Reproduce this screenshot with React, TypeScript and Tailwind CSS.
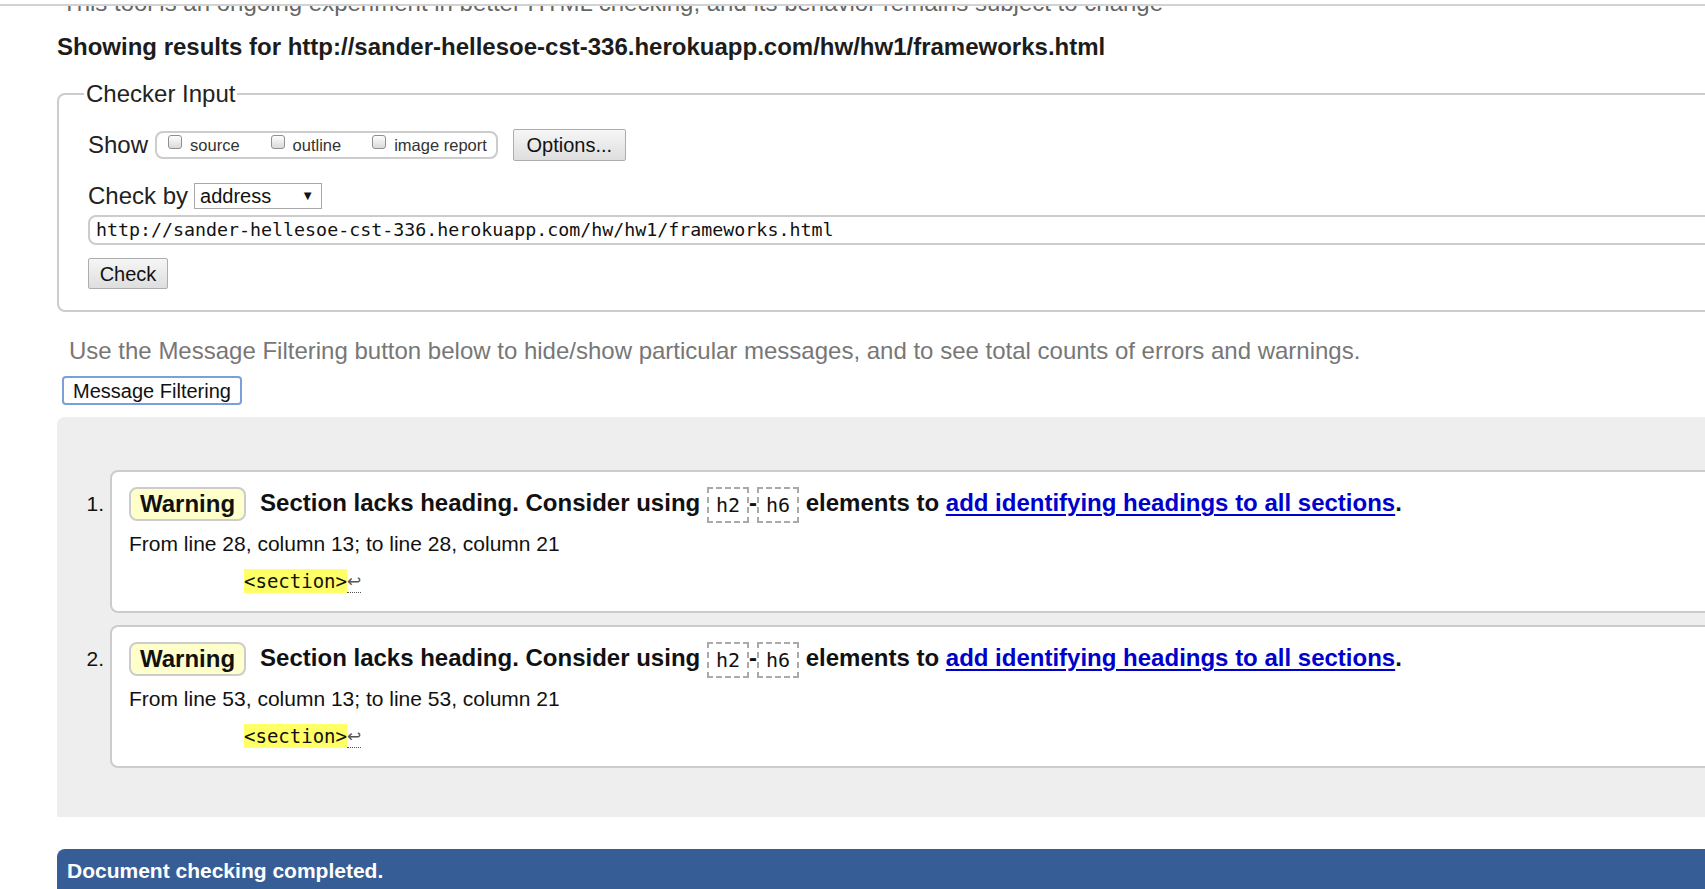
import React from "react";

type Msg = { n: number; from: string };

const messages: Msg[] = [
  { n: 1, from: "From line 28, column 13; to line 28, column 21" },
  { n: 2, from: "From line 53, column 13; to line 53, column 21" },
];

function Checkbox({ label }: { label: string }) {
  return (
    <label className="flex items-center">
      <span className="mb-[7px] mr-[8px] h-[14px] w-[14px] rounded-[3px] border border-[#8f8f8f] bg-linear-to-b from-[#fdfdfd] to-[#dadada]" />
      <span className="text-[16.5px] leading-[20px] text-[#333]">{label}</span>
    </label>
  );
}

function Code({ children }: { children: React.ReactNode }) {
  return (
    <span className="inline-block h-[36px] border-2 border-dashed border-[#aaa] px-[7px] align-middle font-['DejaVu_Sans_Mono',monospace] text-[20px] font-normal leading-[32px]">
      {children}
    </span>
  );
}

function Message({ msg }: { msg: Msg }) {
  return (
    <li className="flex">
      <div className="w-[53px] shrink-0 pr-[6px] pt-[16px] text-right text-[21px] leading-[36px]">
        {msg.n}.
      </div>
      <div className="flex-1 rounded-lg border-2 border-[#ccc] bg-white pb-[18px] pl-[17px] pt-[14px]">
        <div className="flex h-[36px] items-center whitespace-nowrap text-[24px] font-bold">
          <span className="h-[34px] rounded-lg border-2 border-[#ccc] bg-[#ffc] px-[9px] leading-[30px]">
            Warning
          </span>
          <span className="ml-[14px] leading-[36px]">
            Section lacks heading. Consider using <Code>h2</Code>-<Code>h6</Code> elements to{" "}
            <a href="#" className="text-[#00c] underline underline-offset-[3px]">
              add identifying headings to all sections
            </a>
            .
          </span>
        </div>
        <p className="mt-[7px] text-[21px] leading-[30px]">{msg.from}</p>
        <div className="mt-[10px] flex h-[24px] items-end pl-[115px]">
          <span className="bg-[#ff6] font-['DejaVu_Sans_Mono',monospace] text-[19px] leading-[24px]">
            {"<section>"}
          </span>
          <span className="border-b border-dotted border-[#555] text-[17px] leading-[20px] text-[#555]">
            ↩
          </span>
        </div>
      </div>
    </li>
  );
}

export default function App() {
  return (
    <div className="relative h-[889px] w-full overflow-hidden bg-white font-['Liberation_Sans',Arial,sans-serif] text-[#111]">
      <div className="absolute inset-x-0 top-0 z-10 h-[6px] border-b-2 border-[#d2d2d2] bg-white" />
      <div className="w-[1800px] pl-[57px]">
        <p className="-mt-[11px] pl-[5px] text-[24px] leading-[28px] text-[#666]">
          This tool is an ongoing experiment in better HTML checking, and its behavior remains subject to change
        </p>
        <h2 className="mt-[16px] text-[24px] font-bold leading-[28px] text-[#1c1c1c]">
          Showing results for http://sander-hellesoe-cst-336.herokuapp.com/hw/hw1/frameworks.html
        </h2>

        <fieldset className="mt-[19px] rounded-lg border-2 border-[#ccc] pb-[21px] pl-[29px] text-[#222]">
          <legend className="-ml-[4px] px-[2px] text-[24px] leading-[28px]">Checker Input</legend>
          <div className="mt-[21px] flex h-[32px] items-center">
            <span className="text-[24px] leading-[28px]">Show</span>
            <div className="ml-[7px] flex h-[28px] items-center gap-[31px] rounded-lg border-2 border-[#ccc] pl-[11px] pr-[9px]">
              <Checkbox label="source" />
              <Checkbox label="outline" />
              <Checkbox label="image report" />
            </div>
            <button className="ml-[15px] h-[32px] w-[113px] rounded-[2px] border border-[#adadad] bg-linear-to-b from-[#f6f6f6] to-[#dedede] text-[20px] text-[#111]">
              Options...
            </button>
          </div>
          <div className="mt-[22px] flex h-[26px] items-center">
            <span className="text-[24px] leading-[28px]">Check by</span>
            <div className="ml-[6px] flex h-[26px] w-[128px] items-center justify-between border border-[#a9a9a9] bg-white pl-[5px] pr-[7px]">
              <span className="text-[20px] leading-[24px] text-[#111]">address</span>
              <span className="text-[13px] text-[#111]">▼</span>
            </div>
          </div>
          <div className="mt-[6px] flex h-[30px] w-full items-center rounded-lg border-2 border-[#ccc] pl-[6px] font-['DejaVu_Sans_Mono',monospace] text-[18.3px] text-[#111]">
            http://sander-hellesoe-cst-336.herokuapp.com/hw/hw1/frameworks.html
          </div>
          <button className="mt-[13px] h-[31px] w-[80px] rounded-[2px] border border-[#adadad] bg-linear-to-b from-[#f6f6f6] to-[#dedede] text-[20px] text-[#111]">
            Check
          </button>
        </fieldset>

        <p className="mt-[25px] pl-[12px] text-[24px] leading-[28px] text-[#777]">
          Use the Message Filtering button below to hide/show particular messages, and to see total counts of errors and warnings.
        </p>
        <button className="ml-[5px] mt-[11px] h-[29px] w-[180px] rounded-[4px] border-2 border-[#7aa0dc] bg-white text-[20px] leading-[24px] text-[#111]">
          Message Filtering
        </button>

        <div className="mt-[12px] rounded-tl-lg bg-[#eee] pb-[49px] pt-[53px]">
          <ol className="flex flex-col gap-[12px]">
            {messages.map((m) => (
              <Message key={m.n} msg={m} />
            ))}
          </ol>
        </div>

        <div className="mt-[32px] h-[60px] rounded-tl-lg bg-[#375d96] pl-[10px] pt-[10px] text-[21px] font-bold leading-[24px] text-white">
          Document checking completed.
        </div>
      </div>
    </div>
  );
}
